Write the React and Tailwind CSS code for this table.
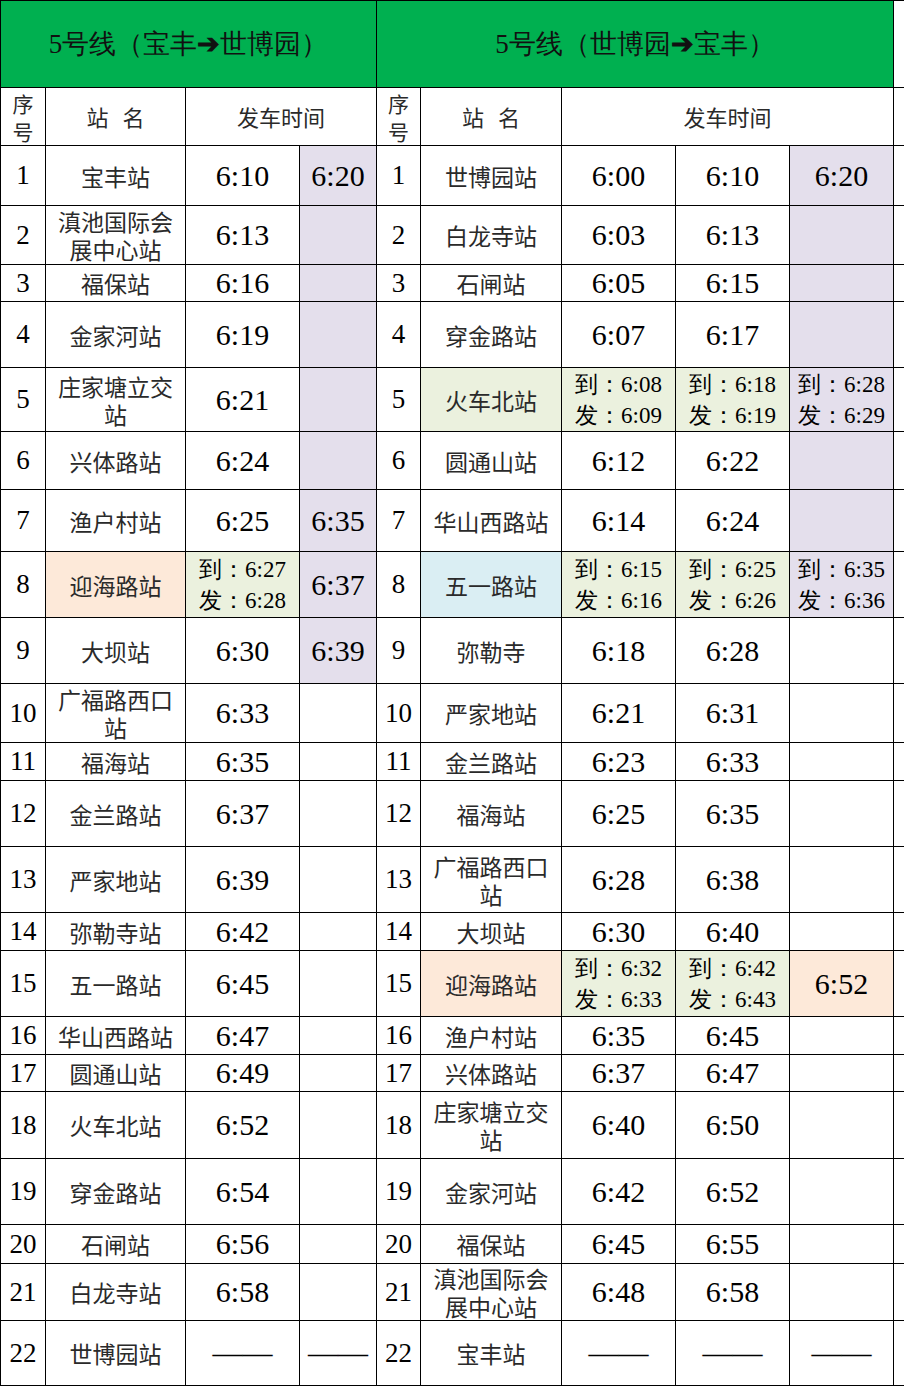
const serif = "[font-family:Liberation_Serif,serif]";
const cjk = "font-['Noto_Sans_CJK_SC',sans-serif]";

const bgs = {
  lav: "bg-[#e4dfec]",
  grn: "bg-[#ebf1de]",
  pch: "bg-[#fde9d9]",
  blu: "bg-[#daeef3]",
};

// row heights taken from the sheet
const heights = [
  "h-[60px]", "h-[59px]", "h-[37px]", "h-[66px]", "h-[64px]", "h-[58px]",
  "h-[62px]", "h-[66px]", "h-[66px]", "h-[59px]", "h-[38px]", "h-[66px]",
  "h-[66px]", "h-[38px]", "h-[66px]", "h-[38px]", "h-[37px]", "h-[67px]",
  "h-[66px]", "h-[39px]", "h-[57px]", "h-[65px]",
];

const c = (v, bg) => ({ v, bg });
const D = "——";

const rows = [
  { l: ["宝丰站", null, [c("6:10"), c("6:20", "lav")]], r: ["世博园站", null, [c("6:00"), c("6:10"), c("6:20", "lav")]] },
  { l: ["滇池国际会展中心站", null, [c("6:13"), c("", "lav")]], r: ["白龙寺站", null, [c("6:03"), c("6:13"), c("", "lav")]] },
  { l: ["福保站", null, [c("6:16"), c("", "lav")]], r: ["石闸站", null, [c("6:05"), c("6:15"), c("", "lav")]] },
  { l: ["金家河站", null, [c("6:19"), c("", "lav")]], r: ["穿金路站", null, [c("6:07"), c("6:17"), c("", "lav")]] },
  { l: ["庄家塘立交站", null, [c("6:21"), c("", "lav")]], r: ["火车北站", "grn", [c(["6:08", "6:09"], "grn"), c(["6:18", "6:19"], "grn"), c(["6:28", "6:29"], "lav")]] },
  { l: ["兴体路站", null, [c("6:24"), c("", "lav")]], r: ["圆通山站", null, [c("6:12"), c("6:22"), c("", "lav")]] },
  { l: ["渔户村站", null, [c("6:25"), c("6:35", "lav")]], r: ["华山西路站", null, [c("6:14"), c("6:24"), c("", "lav")]] },
  { l: ["迎海路站", "pch", [c(["6:27", "6:28"], "grn"), c("6:37", "lav")]], r: ["五一路站", "blu", [c(["6:15", "6:16"], "grn"), c(["6:25", "6:26"], "grn"), c(["6:35", "6:36"], "lav")]] },
  { l: ["大坝站", null, [c("6:30"), c("6:39", "lav")]], r: ["弥勒寺", null, [c("6:18"), c("6:28"), c("")]] },
  { l: ["广福路西口站", null, [c("6:33"), c("")]], r: ["严家地站", null, [c("6:21"), c("6:31"), c("")]] },
  { l: ["福海站", null, [c("6:35"), c("")]], r: ["金兰路站", null, [c("6:23"), c("6:33"), c("")]] },
  { l: ["金兰路站", null, [c("6:37"), c("")]], r: ["福海站", null, [c("6:25"), c("6:35"), c("")]] },
  { l: ["严家地站", null, [c("6:39"), c("")]], r: ["广福路西口站", null, [c("6:28"), c("6:38"), c("")]] },
  { l: ["弥勒寺站", null, [c("6:42"), c("")]], r: ["大坝站", null, [c("6:30"), c("6:40"), c("")]] },
  { l: ["五一路站", null, [c("6:45"), c("")]], r: ["迎海路站", "pch", [c(["6:32", "6:33"], "grn"), c(["6:42", "6:43"], "grn"), c("6:52", "pch")]] },
  { l: ["华山西路站", null, [c("6:47"), c("")]], r: ["渔户村站", null, [c("6:35"), c("6:45"), c("")]] },
  { l: ["圆通山站", null, [c("6:49"), c("")]], r: ["兴体路站", null, [c("6:37"), c("6:47"), c("")]] },
  { l: ["火车北站", null, [c("6:52"), c("")]], r: ["庄家塘立交站", null, [c("6:40"), c("6:50"), c("")]] },
  { l: ["穿金路站", null, [c("6:54"), c("")]], r: ["金家河站", null, [c("6:42"), c("6:52"), c("")]] },
  { l: ["石闸站", null, [c("6:56"), c("")]], r: ["福保站", null, [c("6:45"), c("6:55"), c("")]] },
  { l: ["白龙寺站", null, [c("6:58"), c("")]], r: ["滇池国际会展中心站", null, [c("6:48"), c("6:58"), c("")]] },
  { l: ["世博园站", null, [c(D), c(D)]], r: ["宝丰站", null, [c(D), c(D), c(D)]] },
];

const td = "border border-black p-0 text-center align-middle";

function TimeCell({ cell }) {
  const bg = cell.bg ? bgs[cell.bg] : "";
  if (Array.isArray(cell.v)) {
    return (
      <td className={`${td} ${bg} ${serif} text-[23px] leading-[31px] text-black`}>
        <div>到：{cell.v[0]}</div>
        <div>发：{cell.v[1]}</div>
      </td>
    );
  }
  return (
    <td className={`${td} ${bg} ${serif} text-[30px] leading-none text-black`}>
      {cell.v}
    </td>
  );
}

function Side({ n, side }) {
  const [name, nameBg, times] = side;
  return (
    <>
      <td className={`${td} ${serif} text-[27px] leading-none text-black`}>{n}</td>
      <td className={`${td} ${nameBg ? bgs[nameBg] : ""} ${cjk} px-[6px] text-[23px] leading-[28px] text-[#2a2a2a]`}>
        {name}
      </td>
      {times.map((t, i) => (
        <TimeCell key={i} cell={t} />
      ))}
    </>
  );
}

function HeadCells({ span }) {
  return (
    <>
      <td className={`${td} ${cjk} text-[21px] leading-[28px] text-[#2a2a2a]`}>
        <div>序</div>
        <div>号</div>
      </td>
      <td className={`${td} ${cjk} text-[22px] text-[#2a2a2a]`}>
        站<span className="inline-block w-[14px]" />名
      </td>
      <td colSpan={span} className={`${td} ${cjk} text-[22px] text-[#2a2a2a]`}>
        发车时间
      </td>
    </>
  );
}

export default function App() {
  return (
    <div className="w-[904px] bg-white">
      <table className="w-[904px] table-fixed border-collapse">
        <colgroup>
          <col className="w-[45px]" />
          <col className="w-[140px]" />
          <col className="w-[114px]" />
          <col className="w-[77px]" />
          <col className="w-[44px]" />
          <col className="w-[141px]" />
          <col className="w-[114px]" />
          <col className="w-[114px]" />
          <col className="w-[104px]" />
          <col className="w-[11px]" />
        </colgroup>
        <tbody>
          {/* line titles */}
          <tr className="h-[87px]">
            <td colSpan={4} className={`${td} bg-[#00b050] ${serif} text-[27px] text-[#111]`}>
              5号线（宝丰<span className="font-bold">➔</span>世博园）
            </td>
            <td colSpan={5} className={`${td} bg-[#00b050] ${serif} text-[27px] text-[#111]`}>
              5号线（世博园<span className="font-bold">➔</span>宝丰）
            </td>
            <td className={td}></td>
          </tr>
          {/* column heads */}
          <tr className="h-[58px]">
            <HeadCells span={2} />
            <HeadCells span={3} />
            <td className={td}></td>
          </tr>
          {rows.map((row, i) => (
            <tr key={i} className={heights[i]}>
              <Side n={i + 1} side={row.l} />
              <Side n={i + 1} side={row.r} />
              <td className={td}></td>
            </tr>
          ))}
        </tbody>
      </table>
    </div>
  );
}
